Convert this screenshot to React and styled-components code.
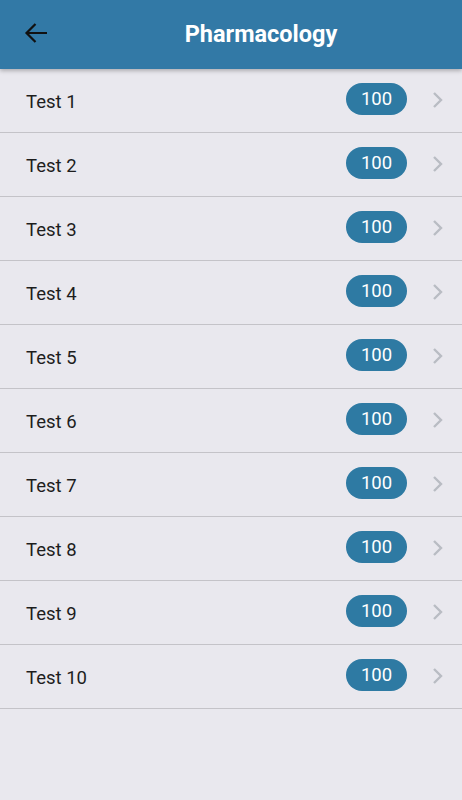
import React from "react"
import styled, { createGlobalStyle } from "styled-components"

const GlobalStyle = createGlobalStyle`
    body {
        margin: 0;
        background: #e9e8ee;
        font-family: Roboto, "Liberation Sans", sans-serif;
    }
`

const Page = styled.div`
    min-height: 800px;
    background: #e9e8ee;
`

const Header = styled.header`
    height: 69px;
    background: #3279a6;
    display: flex;
    align-items: center;
    box-shadow: 0 2px 4px rgba(0, 0, 0, 0.25);
    position: relative;
    z-index: 1;
`

const BackButton = styled.button`
    width: 60px;
    height: 69px;
    border: none;
    background: none;
    padding: 0 0 4px 24px;
    display: flex;
    align-items: center;
`

const Title = styled.h1`
    flex: 1;
    margin: 0;
    text-align: center;
    color: #fff;
    font-size: 23.5px;
    font-weight: 700;
    padding-bottom: 2px;
`

const List = styled.ul`
    list-style: none;
    margin: 0;
    padding: 0;
`

const Row = styled.li`
    height: 63px;
    display: flex;
    align-items: center;
    padding: 0 18px 0 26px;
    border-bottom: 1px solid #c4c3c8;
`

const Label = styled.span`
    flex: 1;
    font-size: 18.5px;
    color: #1d1d1d;
    padding-top: 2px;
`

const Badge = styled.span`
    width: 61px;
    height: 32px;
    border-radius: 16px;
    background: #2e7aa3;
    color: #fff;
    font-size: 18.5px;
    display: flex;
    align-items: center;
    justify-content: center;
    margin-top: -4px;
    margin-right: 25px;
`

const Chevron = styled.svg`
    width: 12px;
    height: 18px;
    margin-top: -1px;
`

export default function App(){
    const tests = Array.from({length: 10}, (_, i) => ({name: `Test ${i + 1}`, score: 100}))

    return (
        <Page>
            <GlobalStyle />
            <Header>
                <BackButton aria-label="Back">
                    <svg width="24" height="22" viewBox="0 0 24 22">
                        <path d="M23 11H2.5M11.5 2L2.5 11l9 9" fill="none" stroke="#111" strokeWidth="2.2" />
                    </svg>
                </BackButton>
                <Title>Pharmacology</Title>
            </Header>
            <List>
                {tests.map(test => (
                    <Row key={test.name}>
                        <Label>{test.name}</Label>
                        <Badge>{test.score}</Badge>
                        <Chevron viewBox="0 0 12 18">
                            <path d="M2 2l7 7-7 7" fill="none" stroke="#b9bcc3" strokeWidth="2.4" />
                        </Chevron>
                    </Row>
                ))}
            </List>
        </Page>
    )
}
